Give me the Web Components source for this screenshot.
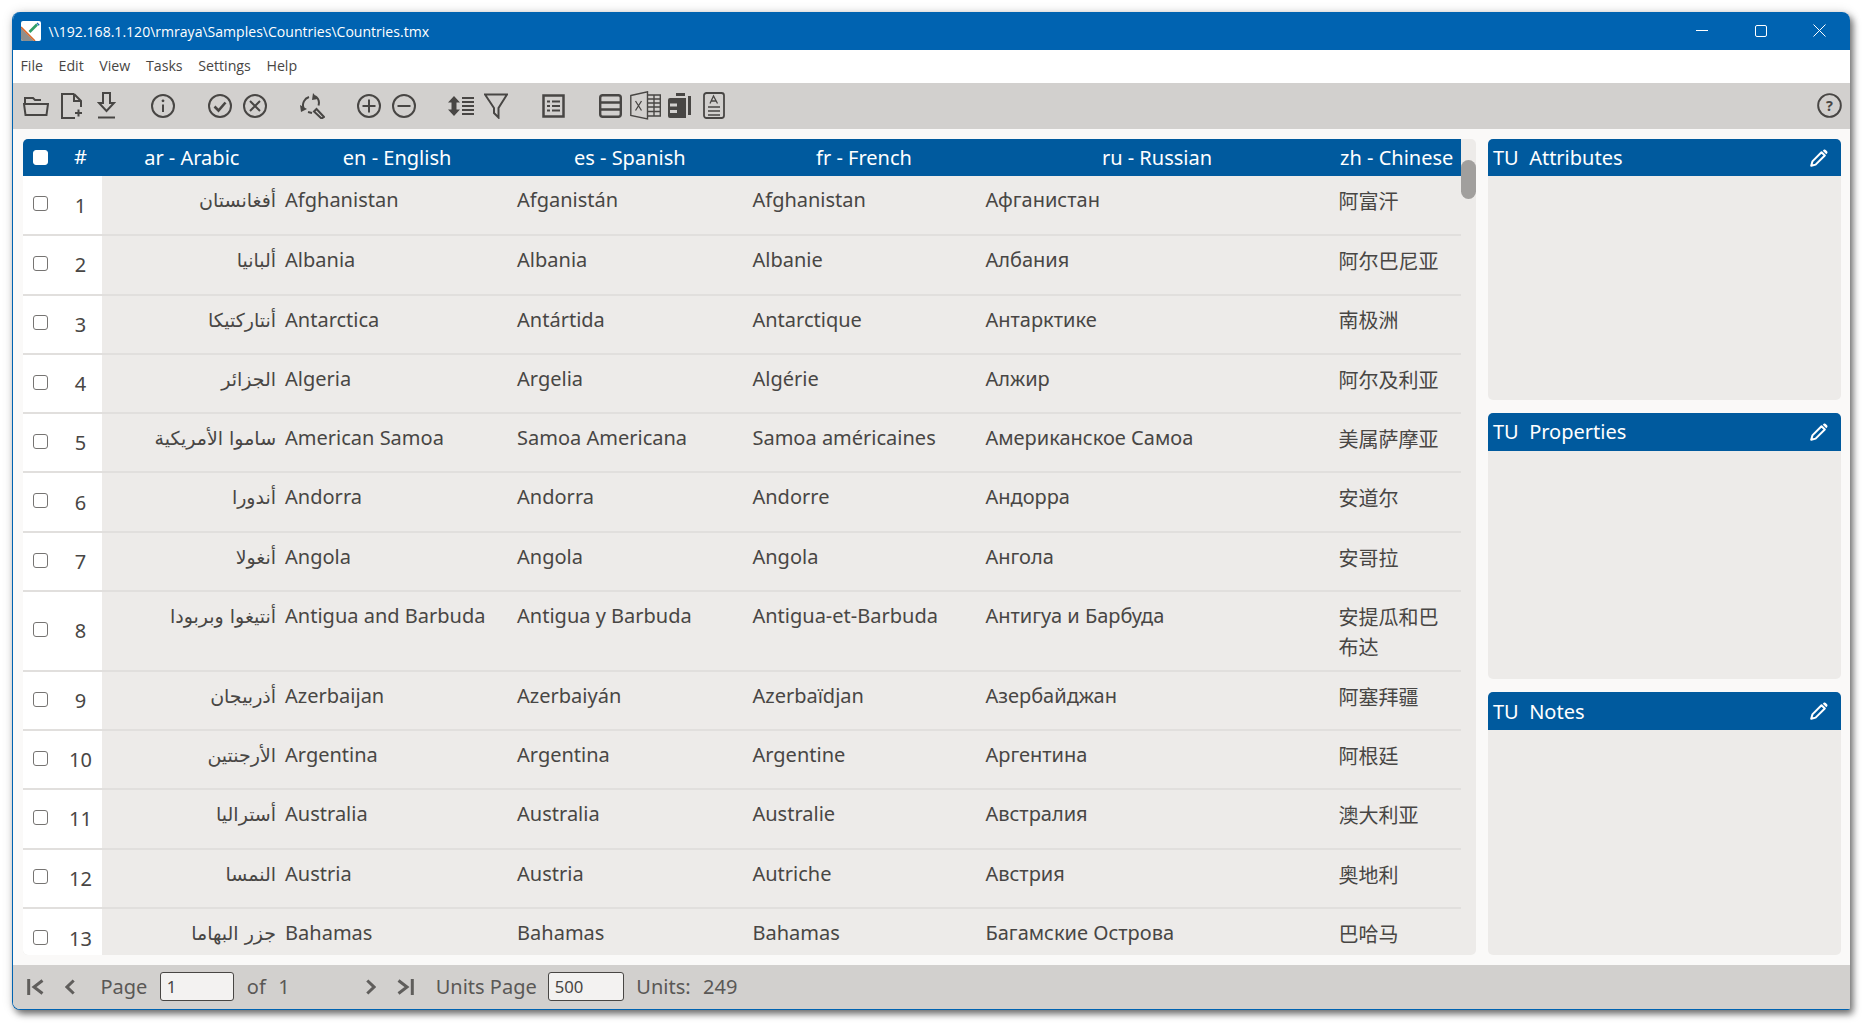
<!DOCTYPE html>
<html><head><meta charset="utf-8"><style>
html,body{margin:0;padding:0;height:100%;background:#fff;overflow:hidden}
body{padding:12.3px 20px 19.5px 12.3px;box-sizing:border-box;font-family:"Noto Sans",sans-serif;height:1029px}
</style></head><body>
<app-window>
<title-bar slot="title">\\192.168.1.120\rmraya\Samples\Countries\Countries.tmx</title-bar>
<menu-bar slot="menu"></menu-bar>
<tool-bar slot="tools"></tool-bar>
<unit-table slot="table"></unit-table>
<side-panel slot="side" style="flex:261">TU&nbsp; Attributes</side-panel>
<side-panel slot="side" style="flex:266">TU&nbsp; Properties</side-panel>
<side-panel slot="side" style="flex:262">TU&nbsp; Notes</side-panel>
<page-bar slot="foot"></page-bar>
</app-window>
<script>
const ICON='#484644';
function def(name,css,html,init){customElements.define(name,class extends HTMLElement{constructor(){super();const r=this.attachShadow({mode:'open'});r.innerHTML='<style>'+css+'</style>'+html;if(init)init.call(this,r)}})}

def('app-window',`:host{display:flex;flex-direction:column;height:100%;box-sizing:border-box;border:1.5px solid #0063b1;border-right:0;border-top-width:0;border-radius:8px 8px 2px 8px;overflow:hidden;box-shadow:3px 4px 7px rgba(0,0,0,.55),0 0 12px rgba(0,0,0,.12);background:#faf9f8;color:#323130}
.main{flex:1;display:flex;gap:12px;padding:10px 9px 10px 9.7px;min-height:0}
.side{width:353px;flex:none;display:flex;flex-direction:column;gap:13px}
.tbl{flex:1;min-width:0;display:flex}`,
`<slot name="title"></slot><slot name="menu"></slot><slot name="tools"></slot><div class="main"><div class="tbl"><slot name="table"></slot></div><div class="side"><slot name="side"></slot></div></div><slot name="foot"></slot>`);

def('title-bar',`:host{display:flex;align-items:center;height:37.7px;background:#0063b1;color:#fff;font:14.05px "Open Sans","Noto Sans",sans-serif;flex:none;padding-left:8.2px;padding-right:1.5px;box-sizing:border-box}
.logo{width:20px;height:20px;margin-right:7px;flex:none}
.t{flex:1}
.b{width:58.5px;height:100%;display:flex;align-items:center;justify-content:center;padding-bottom:1px;box-sizing:border-box}
svg{display:block}`,
`<svg class="logo" viewBox="0 0 20 20"><rect width="20" height="20" rx="2" fill="#fff"/><path d="M0 7 L13 20 H2 Q0 20 0 18Z" fill="#8f8f8d"/><path d="M0 6L14 20" stroke="#d9682a" stroke-width="1.6" fill="none"/><path d="M8.5 11L16 3.5" stroke="#2f9f68" stroke-width="2.6" fill="none"/><path d="M16 2L18.2 4.2" stroke="#1a6fb0" stroke-width="1.4" fill="none"/></svg>
<span class="t"><slot></slot></span>
<span class="b"><svg width="12" height="2" viewBox="0 0 12 2"><path d="M0 .5H12" stroke="#fff" stroke-width="1"/></svg></span>
<span class="b"><svg width="12" height="12" viewBox="0 0 12 12"><rect x=".5" y=".5" width="11" height="11" rx="1.5" fill="none" stroke="#fff"/></svg></span>
<span class="b"><svg width="13" height="13" viewBox="0 0 13 13"><path d="M.5 .5L12.5 12.5M12.5 .5L.5 12.5" stroke="#fff" fill="none"/></svg></span>`);

def('menu-bar',`:host{display:flex;align-items:center;height:33px;background:#fff;color:#484644;font:14.2px "Open Sans","Noto Sans",sans-serif;flex:none;padding:0 0 2px 7.2px;gap:15.6px;box-sizing:border-box}`,
`<span>File</span><span>Edit</span><span>View</span><span>Tasks</span><span>Settings</span><span>Help</span>`);

const S=`fill="none" stroke="${ICON}" stroke-width="2"`;
const circ=`<circle cx="12" cy="12" r="11" ${S}/>`;
const ICONS={
folder:[26,21,`<path d="M2 8V3h8l2 2h6M1 9H25L23.5 20H2.5Z" ${S}/>`,0],
newf:[23,26,`<path d="M14 1H2V25H15M14 1L21 8V14M14 1V8H21M15 20H22M18.5 16.5V23.5" ${S}/>`,11],
save:[19,27,`<path d="M6 1H13V11H17L9.5 19L2 11H6ZM1 25.5H18" ${S}/>`,14],
info:[24,24,circ+`<path d="M12 10.5V18" ${S}/><circle cx="12" cy="6.8" r="1.4" fill="${ICON}"/>`,35],
check:[24,24,circ+`<path d="M6.5 12.5L10.5 16.5L17.5 8.5" fill="none" stroke="${ICON}" stroke-width="2.6"/>`,33],
cross:[24,24,circ+`<path d="M7 7L17 17M17 7L7 17" ${S}/>`,11],
repl:[26,26,`<path d="M4.5 15A8.5 8.5 0 0 1 10 4M16 3A8.5 8.5 0 0 1 19.5 12.5M15 18.5L17.5 16L25 24L22.5 25.5Z" ${S}/><path d="M14 0L13 7L19 6ZM1 12L2 19L8 16Z" fill="${ICON}"/><path d="M9 19L13 20" ${S}/>`,32],
plus:[24,24,circ+`<path d="M5.5 12H18.5M12 5.5V18.5" ${S}/>`,32],
minus:[24,24,circ+`<path d="M5.5 12H18.5" ${S}/>`,11.5],
sort:[26,20,`<path d="M6 0L12 6.5H8.5V13.5H12L6 20L0 13.5H3.5V6.5H0Z" fill="${ICON}"/><path d="M14 2H26M14 6H26M14 10H26M14 14H26M14 18H26" fill="none" stroke="${ICON}" stroke-width="2"/>`,31.5],
filter:[24,26,`<path d="M1 1.5H23L14.5 15V24.5L10 20V15Z" ${S}/>`,10],
list:[23,24,`<rect x="1.5" y="1.5" width="20" height="21" fill="none" stroke="${ICON}" stroke-width="2.5"/><path d="M5 7.5H8M10 7.5H18M5 12H8M10 12H18M5 16.5H8M10 16.5H18" ${S}/>`,34],
rows:[23,24,`<rect x="1.2" y="1.2" width="20.6" height="21.6" rx="2.5" fill="none" stroke="${ICON}" stroke-width="2.4"/><path d="M1 8.5H22M1 15.5H22" fill="none" stroke="${ICON}" stroke-width="2.4"/>`,34],
excel:[31,29,`<path d="M.8 4.5L17.5 .8V28L.8 24.5Z" fill="none" stroke="${ICON}" stroke-width="1.4"/><path d="M5.5 10L11.5 19.5M11.5 10L5.5 19.5" fill="none" stroke="${ICON}" stroke-width="1.3"/><path d="M18 4H30.3V25H18M18 8H30.3M18 12H30.3M18 16H30.3M18 20.5H30.3M24 4V25" fill="none" stroke="${ICON}" stroke-width="1.4"/>`,8],
copies:[24,25,`<path d="M8 0H17V3H23V22H20V3H8Z" fill="${ICON}"/><path d="M2 5H18V25H2Q0 25 0 23V7Q0 5 2 5Z" fill="${ICON}"/><path d="M2 10.5H9V13.5H2ZM2 17H9V20H2Z" fill="#d2d0ce"/>`,7],
doc:[22,27,`<rect x="1" y="1" width="20" height="25" rx="2.5" fill="none" stroke="${ICON}" stroke-width="1.8"/><path d="M5 15H17M5 19H17M5 23H17" stroke="${ICON}" stroke-width="1.6"/><path d="M7 11.5L10.5 4L14.5 11.5M8.2 9H13" fill="none" stroke="${ICON}" stroke-width="1.3"/>`,11]};
function icon(n){const [w,h,p,m]=ICONS[n];return `<svg style="margin-left:${m}px" width="${w}" height="${h}" viewBox="0 0 ${w} ${h}">${p}</svg>`}
def('tool-bar',`:host{display:flex;align-items:center;height:46px;background:#d2d0ce;flex:none;padding:0 8px 0 9.7px;box-sizing:border-box}svg{display:block;flex:none}.sp{flex:1}`,
Object.keys(ICONS).map(icon).join('')+`<span class="sp"></span><svg width="25" height="25" viewBox="0 0 26 26"><circle cx="13" cy="13" r="11.8" ${S}/><text x="13" y="18.5" text-anchor="middle" font-family="Noto Sans" font-weight="700" font-size="15" fill="${ICON}">?</text></svg>`);

const D=[
['أفغانستان','Afghanistan','Afganistán','Afghanistan','Афганистан','阿富汗'],
['ألبانيا','Albania','Albania','Albanie','Албания','阿尔巴尼亚'],
['أنتاركتيكا','Antarctica','Antártida','Antarctique','Антарктике','南极洲'],
['الجزائر','Algeria','Argelia','Algérie','Алжир','阿尔及利亚'],
['ساموا الأمريكية','American Samoa','Samoa Americana','Samoa américaines','Американское Самоа','美属萨摩亚'],
['أندورا','Andorra','Andorra','Andorre','Андорра','安道尔'],
['أنغولا','Angola','Angola','Angola','Ангола','安哥拉'],
['أنتيغوا وبربودا','Antigua and Barbuda','Antigua y Barbuda','Antigua-et-Barbuda','Антигуа и Барбуда','安提瓜和巴布达'],
['أذربيجان','Azerbaijan','Azerbaiyán','Azerbaïdjan','Азербайджан','阿塞拜疆'],
['الأرجنتين','Argentina','Argentina','Argentine','Аргентина','阿根廷'],
['أستراليا','Australia','Australia','Australie','Австралия','澳大利亚'],
['النمسا','Austria','Austria','Autriche','Австрия','奥地利'],
['جزر البهاما','Bahamas','Bahamas','Bahamas','Багамские Острова','巴哈马']];
const rows=D.map((r,i)=>`<tr><td class="fix"><span class="cb"></span></td><td class="fix num">${i+1}</td><td class="ar" dir="rtl">${r[0]}</td><td>${r[1]}</td><td>${r[2]}</td><td>${r[3]}</td><td>${r[4]}</td><td class="zh">${r[5]}</td></tr>`).join('');
def('unit-table',`:host{display:block;flex:1;min-width:0;position:relative;background:#edebe9;border-radius:5px;overflow:hidden;padding-right:15px}
.clip{height:100%;overflow:hidden;background:#edebe9}
table{border-collapse:separate;border-spacing:0;table-layout:fixed;width:100%;font:20px/28px "Noto Sans",sans-serif;color:#484644}
th{background:#005a9e;color:#fff;font-weight:400;height:37px;box-sizing:border-box;padding:1px 5px 0 3px;white-space:nowrap;line-height:26px}
td{padding:10px 4px 10px;vertical-align:top;height:59.3px;box-sizing:border-box;border-bottom:2px solid #e1dfdd}
tbody tr:first-child td{height:60.3px}
tr:last-child td{border-bottom:0}
td.fix{background:#fff;vertical-align:middle;padding:0 0 6px;text-align:center}
td.num{padding:1px 0 0}
th:nth-child(1){padding:0 0 3px}
th:nth-child(2){padding:0}
th:nth-child(3),th:nth-child(4){padding:1px 4px 0}
.ar{font-family:"DejaVu Sans","Noto Sans",sans-serif;font-size:19px;padding-right:5px}
td.zh{font-family:"Noto Sans CJK SC",sans-serif;line-height:30px;padding:9.9px 16px 7.8px 4px}
.cb{display:inline-block;width:13px;height:13px;border:1px solid #767472;border-radius:3px;background:#fff;vertical-align:middle}
th .cb{border-color:#fff}
.thumb{position:absolute;right:0;top:21px;width:15px;height:39px;border-radius:8px;background:#a19f9d}`,
`<div class="clip"><table><colgroup><col style="width:35.5px"><col style="width:44px"><col style="width:178.6px"><col style="width:232px"><col style="width:235.4px"><col style="width:233px"><col style="width:353px"><col></colgroup>
<thead><tr><th><span class="cb"></span></th><th>#</th><th>ar - Arabic</th><th>en - English</th><th>es - Spanish</th><th>fr - French</th><th>ru - Russian</th><th>zh - Chinese</th></tr></thead><tbody>${rows}</tbody></table></div><div class="thumb"></div>`);

def('side-panel',`:host{display:flex;flex-direction:column;min-height:0;background:#edebe9;border-radius:5px;overflow:hidden}
.h{background:#005a9e;color:#fff;height:37.5px;display:flex;align-items:center;justify-content:space-between;padding:0 12.7px 0 5px;font:20px "Noto Sans",sans-serif;flex:none}
svg{display:block}`,
`<div class="h"><span><slot></slot></span><svg width="18" height="18" viewBox="0 0 18 18"><path d="M1.2 16.8L2.4 12.4L11.5 3.2L14.8 6.5L5.6 15.6Z" fill="none" stroke="#fff" stroke-width="2" stroke-linejoin="round"/><path d="M12.8 1.7L14 .6Q15 .2 15.8 1L17 2.2Q17.8 3 17.4 4L16.3 5.2Z" fill="#fff"/></svg></div>`);

def('page-bar',`:host{display:flex;align-items:center;height:44px;background:#d2d0ce;flex:none;font:20px "Noto Sans",sans-serif;color:#5a5856;padding-left:13.9px}
svg{display:block;flex:none}
input{font:16.7px "Noto Sans",sans-serif;color:#484644;background:#f3f2f1;border:1px solid #484644;border-radius:3px;box-sizing:border-box;height:29px;padding:0 6px;margin:0;outline:0}
span{white-space:nowrap}`,
`<svg width="17" height="16" viewBox="0 0 17 16"><path d="M1.7 0V16M15.5 1.5L7 8L15.5 14.5" fill="none" stroke="#605e5c" stroke-width="3"/></svg>
<svg style="margin-left:21.3px" width="10" height="16" viewBox="0 0 10 16"><path d="M8.7 1.5L2 8L8.7 14.5" fill="none" stroke="#605e5c" stroke-width="3"/></svg>
<span style="margin-left:25px">Page</span><input style="width:74px;margin-left:12.4px" value="1"><span style="margin-left:13px">of</span><span style="margin-left:12.5px">1</span>
<svg style="margin-left:76px" width="10" height="16" viewBox="0 0 10 16"><path d="M1.3 1.5L8 8L1.3 14.5" fill="none" stroke="#605e5c" stroke-width="3"/></svg>
<svg style="margin-left:21px" width="17" height="16" viewBox="0 0 17 16"><path d="M15.3 0V16M1.5 1.5L10 8L1.5 14.5" fill="none" stroke="#605e5c" stroke-width="3"/></svg>
<span style="margin-left:22px">Units Page</span><input style="width:76px;margin-left:11px" value="500"><span style="margin-left:12.5px">Units:</span><span style="margin-left:12.5px">249</span>`);
</script>
</body></html>
